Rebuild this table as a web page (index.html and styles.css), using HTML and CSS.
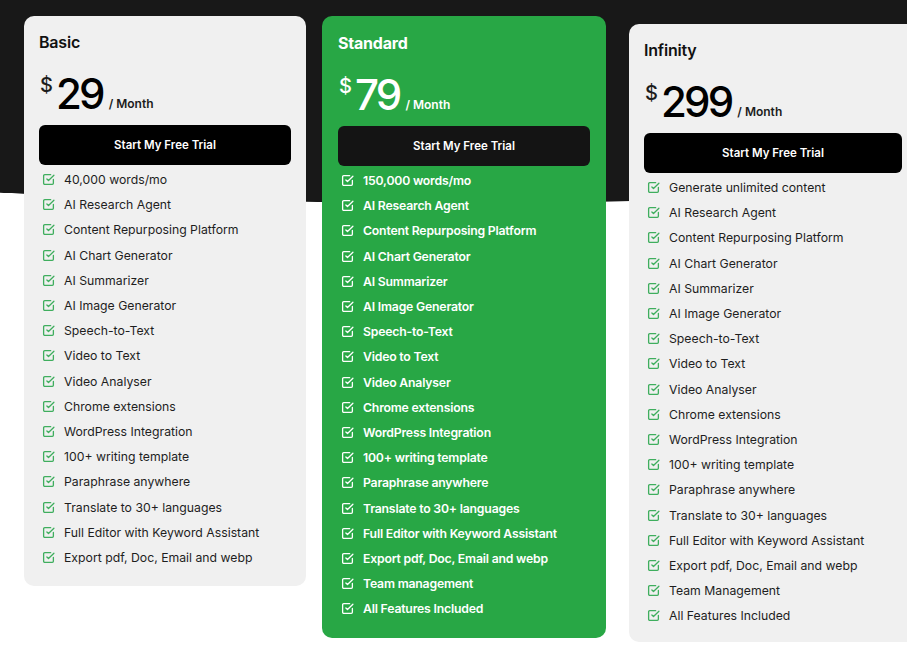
FILE: index.html
```html
<!DOCTYPE html>
<html lang="en">
<head>
<meta charset="utf-8">
<title>Pricing</title>
<link rel="stylesheet" href="styles.css">
</head>
<body>
<svg class="defs" width="0" height="0" aria-hidden="true">
  <symbol id="chk" viewBox="0 0 24 24">
    <polyline points="9 11 12 14 22 4" fill="none" stroke="currentColor" stroke-width="2.4" stroke-linecap="round" stroke-linejoin="round"/>
    <path d="M21 12v7a2 2 0 0 1-2 2H5a2 2 0 0 1-2-2V5a2 2 0 0 1 2-2h11" fill="none" stroke="currentColor" stroke-width="2.4" stroke-linecap="round" stroke-linejoin="round"/>
  </symbol>
</svg>
<main class="plans">
  <section class="card card-basic">
    <h2 class="title">Basic</h2>
    <div class="price"><span class="cur">$</span><span class="amt">29</span><span class="per">/ Month</span></div>
    <a class="btn">Start My Free Trial</a>
    <ul class="feats">
      <li><svg class="ic"><use href="#chk"/></svg>40,000 words/mo</li>
      <li><svg class="ic"><use href="#chk"/></svg>AI Research Agent</li>
      <li><svg class="ic"><use href="#chk"/></svg>Content Repurposing Platform</li>
      <li><svg class="ic"><use href="#chk"/></svg>AI Chart Generator</li>
      <li><svg class="ic"><use href="#chk"/></svg>AI Summarizer</li>
      <li><svg class="ic"><use href="#chk"/></svg>AI Image Generator</li>
      <li><svg class="ic"><use href="#chk"/></svg>Speech-to-Text</li>
      <li><svg class="ic"><use href="#chk"/></svg>Video to Text</li>
      <li><svg class="ic"><use href="#chk"/></svg>Video Analyser</li>
      <li><svg class="ic"><use href="#chk"/></svg>Chrome extensions</li>
      <li><svg class="ic"><use href="#chk"/></svg>WordPress Integration</li>
      <li><svg class="ic"><use href="#chk"/></svg>100+ writing template</li>
      <li><svg class="ic"><use href="#chk"/></svg>Paraphrase anywhere</li>
      <li><svg class="ic"><use href="#chk"/></svg>Translate to 30+ languages</li>
      <li><svg class="ic"><use href="#chk"/></svg>Full Editor with Keyword Assistant</li>
      <li><svg class="ic"><use href="#chk"/></svg>Export pdf, Doc, Email and webp</li>
    </ul>
  </section>

  <section class="card card-standard">
    <h2 class="title">Standard</h2>
    <div class="price"><span class="cur">$</span><span class="amt">79</span><span class="per">/ Month</span></div>
    <a class="btn">Start My Free Trial</a>
    <ul class="feats">
      <li><svg class="ic"><use href="#chk"/></svg>150,000 words/mo</li>
      <li><svg class="ic"><use href="#chk"/></svg>AI Research Agent</li>
      <li><svg class="ic"><use href="#chk"/></svg>Content Repurposing Platform</li>
      <li><svg class="ic"><use href="#chk"/></svg>AI Chart Generator</li>
      <li><svg class="ic"><use href="#chk"/></svg>AI Summarizer</li>
      <li><svg class="ic"><use href="#chk"/></svg>AI Image Generator</li>
      <li><svg class="ic"><use href="#chk"/></svg>Speech-to-Text</li>
      <li><svg class="ic"><use href="#chk"/></svg>Video to Text</li>
      <li><svg class="ic"><use href="#chk"/></svg>Video Analyser</li>
      <li><svg class="ic"><use href="#chk"/></svg>Chrome extensions</li>
      <li><svg class="ic"><use href="#chk"/></svg>WordPress Integration</li>
      <li><svg class="ic"><use href="#chk"/></svg>100+ writing template</li>
      <li><svg class="ic"><use href="#chk"/></svg>Paraphrase anywhere</li>
      <li><svg class="ic"><use href="#chk"/></svg>Translate to 30+ languages</li>
      <li><svg class="ic"><use href="#chk"/></svg>Full Editor with Keyword Assistant</li>
      <li><svg class="ic"><use href="#chk"/></svg>Export pdf, Doc, Email and webp</li>
      <li><svg class="ic"><use href="#chk"/></svg>Team management</li>
      <li><svg class="ic"><use href="#chk"/></svg>All Features Included</li>
    </ul>
  </section>

  <section class="card card-infinity">
    <h2 class="title">Infinity</h2>
    <div class="price"><span class="cur">$</span><span class="amt">299</span><span class="per">/ Month</span></div>
    <a class="btn">Start My Free Trial</a>
    <ul class="feats">
      <li><svg class="ic"><use href="#chk"/></svg>Generate unlimited content</li>
      <li><svg class="ic"><use href="#chk"/></svg>AI Research Agent</li>
      <li><svg class="ic"><use href="#chk"/></svg>Content Repurposing Platform</li>
      <li><svg class="ic"><use href="#chk"/></svg>AI Chart Generator</li>
      <li><svg class="ic"><use href="#chk"/></svg>AI Summarizer</li>
      <li><svg class="ic"><use href="#chk"/></svg>AI Image Generator</li>
      <li><svg class="ic"><use href="#chk"/></svg>Speech-to-Text</li>
      <li><svg class="ic"><use href="#chk"/></svg>Video to Text</li>
      <li><svg class="ic"><use href="#chk"/></svg>Video Analyser</li>
      <li><svg class="ic"><use href="#chk"/></svg>Chrome extensions</li>
      <li><svg class="ic"><use href="#chk"/></svg>WordPress Integration</li>
      <li><svg class="ic"><use href="#chk"/></svg>100+ writing template</li>
      <li><svg class="ic"><use href="#chk"/></svg>Paraphrase anywhere</li>
      <li><svg class="ic"><use href="#chk"/></svg>Translate to 30+ languages</li>
      <li><svg class="ic"><use href="#chk"/></svg>Full Editor with Keyword Assistant</li>
      <li><svg class="ic"><use href="#chk"/></svg>Export pdf, Doc, Email and webp</li>
      <li><svg class="ic"><use href="#chk"/></svg>Team Management</li>
      <li><svg class="ic"><use href="#chk"/></svg>All Features Included</li>
    </ul>
  </section>
</main>
</body>
</html>
```

FILE: styles.css
```css
* { box-sizing: border-box; }

html, body {
  margin: 0;
  padding: 0;
  overflow: hidden;
}

body {
  width: 907px;
  height: 667px;
  font-family: Inter, "Liberation Sans", sans-serif;
  color: #1c1c1c;
  background: #fff radial-gradient(ellipse 1461px 203px at 50% 0, #181818 99.7%, #fff 100%) no-repeat;
}

.defs { position: absolute; width: 0; height: 0; }

.plans {
  display: flex;
  align-items: flex-start;
  gap: 16px;
  padding: 16px 0 0 24px;
}

.card {
  flex: 0 0 auto;
  width: 282px;
  background: #f0f0f0;
  border-radius: 10px;
  padding: 16px 15px 16px;
}

.card-standard {
  width: 284px;
  background: #28a745;
  color: #fff;
  padding: 17px 16px 17px;
}

.card-infinity {
  width: 288px;
  margin-top: 8px;
  margin-left: 7px;
  padding-bottom: 14px;
}

.title {
  margin: 0;
  font-size: 16px;
  line-height: 20px;
  font-weight: 600;
  letter-spacing: -0.2px;
  color: #111;
}

.card-standard .title {
  color: #fff;
  font-weight: 700;
}

.price {
  display: flex;
  align-items: flex-end;
  margin-top: 21px;
  padding-left: 1px;
}

.cur {
  align-self: flex-start;
  font-size: 20px;
  line-height: 1;
  font-weight: 500;
  margin-top: 2px;
  margin-right: 3px;
}

.amt {
  font-size: 42px;
  line-height: 1;
  font-weight: 500;
  letter-spacing: -2.8px;
  color: #000;
}

.card-standard .amt { color: #fff; }

.per {
  font-size: 12px;
  line-height: 1;
  font-weight: 600;
  margin-left: 6px;
  margin-bottom: 5px;
}

.btn {
  display: flex;
  align-items: center;
  justify-content: center;
  height: 40px;
  margin-top: 10px;
  background: #000;
  color: #fff;
  border-radius: 6px;
  font-size: 11.5px;
  font-weight: 600;
  letter-spacing: 0;
}

.card-standard .btn { background: #141414; }

.feats {
  list-style: none;
  margin: 2px 0 0;
  padding: 0;
}

.feats li {
  display: flex;
  align-items: center;
  height: 25.2px;
  font-size: 12.25px;
  color: #1e1e1e;
}

.card-standard .feats li {
  color: #fff;
  font-weight: 600;
  letter-spacing: -0.2px;
}

.ic {
  width: 13px;
  height: 13px;
  margin-left: 3px;
  margin-right: 9px;
  color: #3fae5e;
  flex: 0 0 auto;
}

.card-standard .ic { color: #fff; }
```
